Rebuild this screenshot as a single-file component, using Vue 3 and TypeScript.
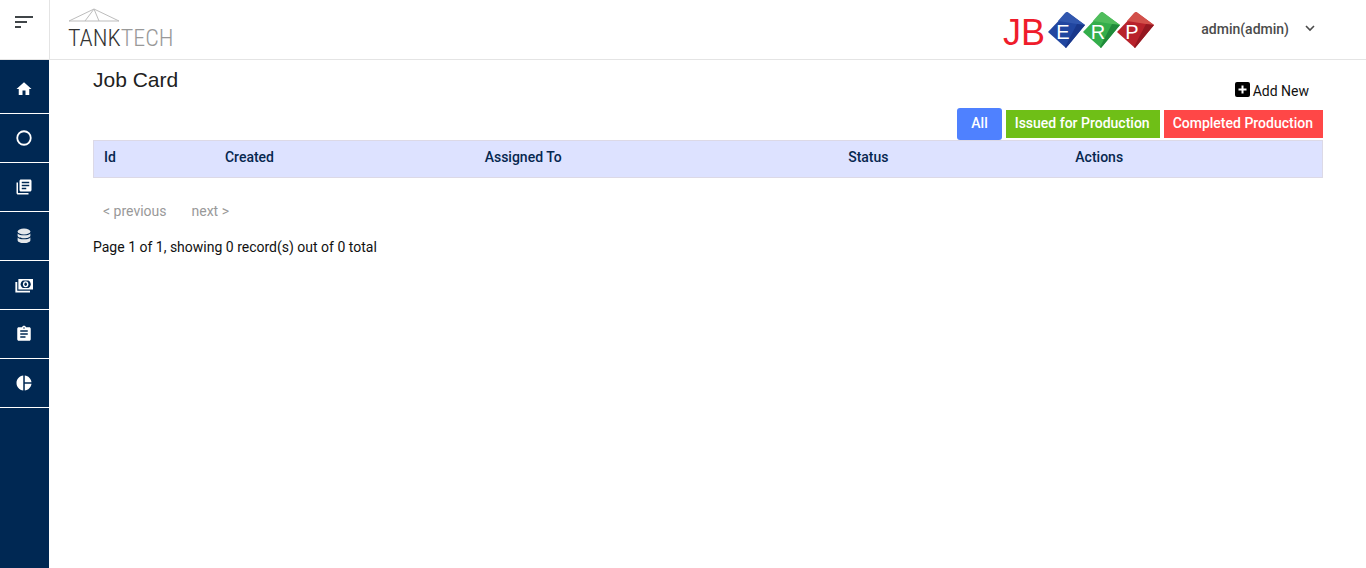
<script setup lang="ts">
interface NavItem {
  label: string
  kind: string
  path?: string
}

const navItems: NavItem[] = [
  { label: 'Home', kind: 'home', path: 'M10 20v-6h4v6h5v-8h3L12 3 2 12h3v8z' },
  { label: 'Overview', kind: 'ring' },
  {
    label: 'Library',
    kind: 'library',
    path: 'M4 6H2v14c0 1.1.9 2 2 2h14v-2H4V6zm16-4H8c-1.1 0-2 .9-2 2v12c0 1.1.9 2 2 2h12c1.1 0 2-.9 2-2V4c0-1.1-.9-2-2-2zm-1 9H9V9h10v2zm-4 4H9v-2h6v2zm4-8H9V5h10v2z',
  },
  { label: 'Data', kind: 'database' },
  { label: 'Payments', kind: 'cash' },
  {
    label: 'Tasks',
    kind: 'clipboard',
    path: 'M19 3h-4.18C14.4 1.84 13.3 1 12 1s-2.4.84-2.82 2H5c-1.1 0-2 .9-2 2v14c0 1.1.9 2 2 2h14c1.1 0 2-.9 2-2V5c0-1.1-.9-2-2-2zm-7 0c.55 0 1 .45 1 1s-.45 1-1 1-1-.45-1-1 .45-1 1-1zm2 14H7v-2h7v2zm3-4H7v-2h10v2zm0-4H7V7h10v2z',
  },
  {
    label: 'Reports',
    kind: 'pie',
    path: 'M11 2v20c-5.07-.5-9-4.79-9-10s3.93-9.5 9-10zm2.03 0v8.99H22c-.47-4.74-4.24-8.52-8.97-8.99zm0 11.01V22c4.74-.47 8.5-4.25 8.97-8.99h-8.97z',
  },
]

const cubes = [
  { letter: 'E', x: 0, front: '#2146a0', top: '#3157ae', side: '#19378a' },
  { letter: 'R', x: 35, front: '#34ae4b', top: '#4fbd5c', side: '#1f8a3a' },
  { letter: 'P', x: 69, front: '#b8222b', top: '#d2504a', side: '#941821' },
]

const columns: { key: string; label: string }[] = [
  { key: 'id', label: 'Id' },
  { key: 'created', label: 'Created' },
  { key: 'assigned', label: 'Assigned To' },
  { key: 'status', label: 'Status' },
  { key: 'actions', label: 'Actions' },
]
</script>

<template>
  <div class="shell">
    <header class="topbar">
      <button class="menu" type="button" aria-label="Toggle menu">
        <svg width="18" height="12" viewBox="0 0 18 12">
          <path d="M0 0h18v2H0zM0 5h12v2H0zM0 10h6v2H0z" fill="#404548" />
        </svg>
      </button>
      <a class="brand" href="#" aria-label="Tanktech">
        <svg width="110" height="46" viewBox="0 0 110 46">
          <path
            d="M1 13 26 1 51 13M1 13H51M26 1 17 13M26 1 31 13"
            fill="none"
            stroke="#bdbdbd"
            stroke-width="1"
          />
          <text class="tank" x="0" y="38">TANK<tspan class="tech">TECH</tspan></text>
        </svg>
      </a>
      <svg class="erp" width="154" height="48" viewBox="-2 -4 154 48" role="img" aria-label="JB ERP">
        <text class="jb" x="0" y="35">JB</text>
        <g v-for="cube in cubes" :key="cube.letter" :transform="`translate(${cube.x} 0)`">
          <path d="M45 22 64 2 82 15 63 38z" :fill="cube.front" />
          <path d="M55 11 62 3Q64 1 66 3L82 15 74 14z" :fill="cube.top" />
          <path d="M74 14 82 15 63 38 62 37z" :fill="cube.side" />
          <text class="cube" x="60" y="29">{{ cube.letter }}</text>
        </g>
      </svg>
      <button class="user" type="button">
        admin(admin)
        <svg width="10" height="7" viewBox="0 0 10 7">
          <path d="m1 1 4 4 4-4" fill="none" stroke="#4b4b4b" stroke-width="1.6" />
        </svg>
      </button>
    </header>

    <div class="body">
      <nav class="sidebar" aria-label="Main">
        <a v-for="item in navItems" :key="item.kind" href="#" :aria-label="item.label" :class="item.kind">
          <svg width="18" height="18" viewBox="0 0 24 24" fill="#fff">
            <path v-if="item.path" :d="item.path" />
            <circle v-else-if="item.kind === 'ring'" cx="12" cy="12" r="9" fill="none" stroke="#fff" stroke-width="2.4" />
            <g v-else-if="item.kind === 'database'" fill="#e4e7ea">
              <ellipse cx="12" cy="6" rx="8.5" ry="4" />
              <path d="M3.500 8.500c2 3.300 15 3.300 17 0v3.200c0 4.400-17 4.400-17 0z" />
              <path d="M3.500 14c2 3.300 15 3.300 17 0v3.500c0 5-17 5-17 0z" />
            </g>
            <g v-else>
              <path d="M4.500 4H24v14H4.500z" />
              <path d="M10.500 6h7.500c2 1.500 3 3 3 5s-1 3.500-3 5h-7.500c-2-1.500-3-3-3-5s1-3.500 3-5z" fill="#002853" />
              <ellipse cx="14.200" cy="11" rx="3.600" ry="4" />
              <ellipse cx="14.200" cy="11" rx="1.700" ry="2.200" fill="#002853" />
              <path d="M.500 8h2.500v11.500h17V22H.500z" />
            </g>
          </svg>
        </a>
      </nav>

      <main class="content">
        <h1>Job Card</h1>
        <div class="add-row">
          <a class="add" href="#">
            <svg width="15" height="15" viewBox="0 0 15 15">
              <rect width="15" height="15" rx="2" fill="#000" />
              <path d="M7.500 3.500v8M3.500 7.500h8" stroke="#fff" stroke-width="2" />
            </svg>
            <span>Add New</span>
          </a>
        </div>
        <div class="filters">
          <button class="all" type="button">All</button>
          <button class="issued" type="button">Issued for Production</button>
          <button class="completed" type="button">Completed Production</button>
        </div>
        <table>
          <thead>
            <tr>
              <th v-for="col in columns" :key="col.key" :class="col.key" scope="col">{{ col.label }}</th>
            </tr>
          </thead>
        </table>
        <div class="pager">
          <a href="#">&lt; previous</a>
          <a href="#">next &gt;</a>
        </div>
        <p>Page 1 of 1, showing 0 record(s) out of 0 total</p>
      </main>
    </div>
  </div>
</template>

<style>
body {
  margin: 0;
  background: #fff;
}
</style>

<style scoped>
.shell {
  display: flex;
  flex-direction: column;
  min-height: 100vh;
  font: 14px/20px Roboto, sans-serif;
  color: #111;
}
.shell *,
.shell {
  box-sizing: border-box;
}
svg {
  display: block;
  flex: none;
}
a {
  color: inherit;
  text-decoration: none;
}
button {
  margin: 0;
  border: 0;
  font: inherit;
  cursor: pointer;
}
.topbar {
  display: flex;
  height: 60px;
  border-bottom: 1px solid #e4e4e4;
}
.menu {
  display: flex;
  width: 50px;
  padding: 16px 0 0 15px;
  background: none;
  border-right: 1px solid #e4e4e4;
}
.brand {
  margin: 8px auto 0 18px;
}
.tank {
  font: 300 24px "Liberation Sans Narrow", "Roboto Condensed", Roboto, sans-serif;
  fill: #333;
}
.tech {
  fill: #999;
}
.erp {
  margin: 6px 46px 0 0;
}
.jb {
  font: 36px "Liberation Sans", sans-serif;
  fill: #ef1c2b;
}
.cube {
  font: 20px "Liberation Sans", sans-serif;
  fill: #fff;
  text-anchor: middle;
}
.user {
  display: flex;
  align-items: center;
  gap: 16px;
  padding: 0 51px 2px 0;
  background: none;
  color: #4b4b4b;
  font-weight: 500;
}
.body {
  display: flex;
  flex: 1;
}
.sidebar {
  width: 49px;
  flex: none;
  background: #002853;
}
.sidebar a {
  display: flex;
  align-items: center;
  justify-content: center;
  height: 49px;
  padding-right: 1px;
  border-bottom: 1px solid #fff;
}
.sidebar a.home {
  height: 54px;
  padding-top: 4px;
}
.content {
  flex: 1;
  padding: 8px 43px 0 44px;
}
h1 {
  margin: 0;
  font: 21px/24px "Liberation Sans", sans-serif;
  color: #212121;
}
.add-row {
  display: flex;
  justify-content: flex-end;
  height: 16px;
  padding-right: 14px;
}
.add {
  display: flex;
  align-items: center;
  gap: 3px;
  height: 0;
}
.add svg {
  margin-bottom: 6px;
}
.add span {
  margin-bottom: 2px;
}
.filters {
  display: flex;
  align-items: center;
  justify-content: flex-end;
  gap: 4px;
}
.filters button {
  height: 28px;
  padding: 0 10px 2px 9px;
  color: #fff;
  font-weight: 500;
}
.filters .all {
  height: 32px;
  padding: 0 14px 2px;
  border-radius: 3px;
  background: #4f81ff;
}
.filters .issued {
  background: #6fbf17;
}
.filters .completed {
  background: #ff4747;
}
table {
  width: 100%;
  table-layout: fixed;
  border-spacing: 0;
  border: 1px solid #dcd9e6;
  background: #dde2ff;
}
th {
  height: 36px;
  padding: 6px 10px;
  text-align: left;
  vertical-align: top;
  font-weight: 500;
  color: #06274f;
}
.id {
  width: 9.85%;
}
.created {
  width: 21.15%;
}
.assigned {
  width: 29.6%;
}
.status {
  width: 18.5%;
}
.pager {
  display: flex;
  gap: 25px;
  margin-top: 23px;
  padding-left: 10px;
  color: #999;
}
p {
  margin: 16px 0 0;
}
</style>
